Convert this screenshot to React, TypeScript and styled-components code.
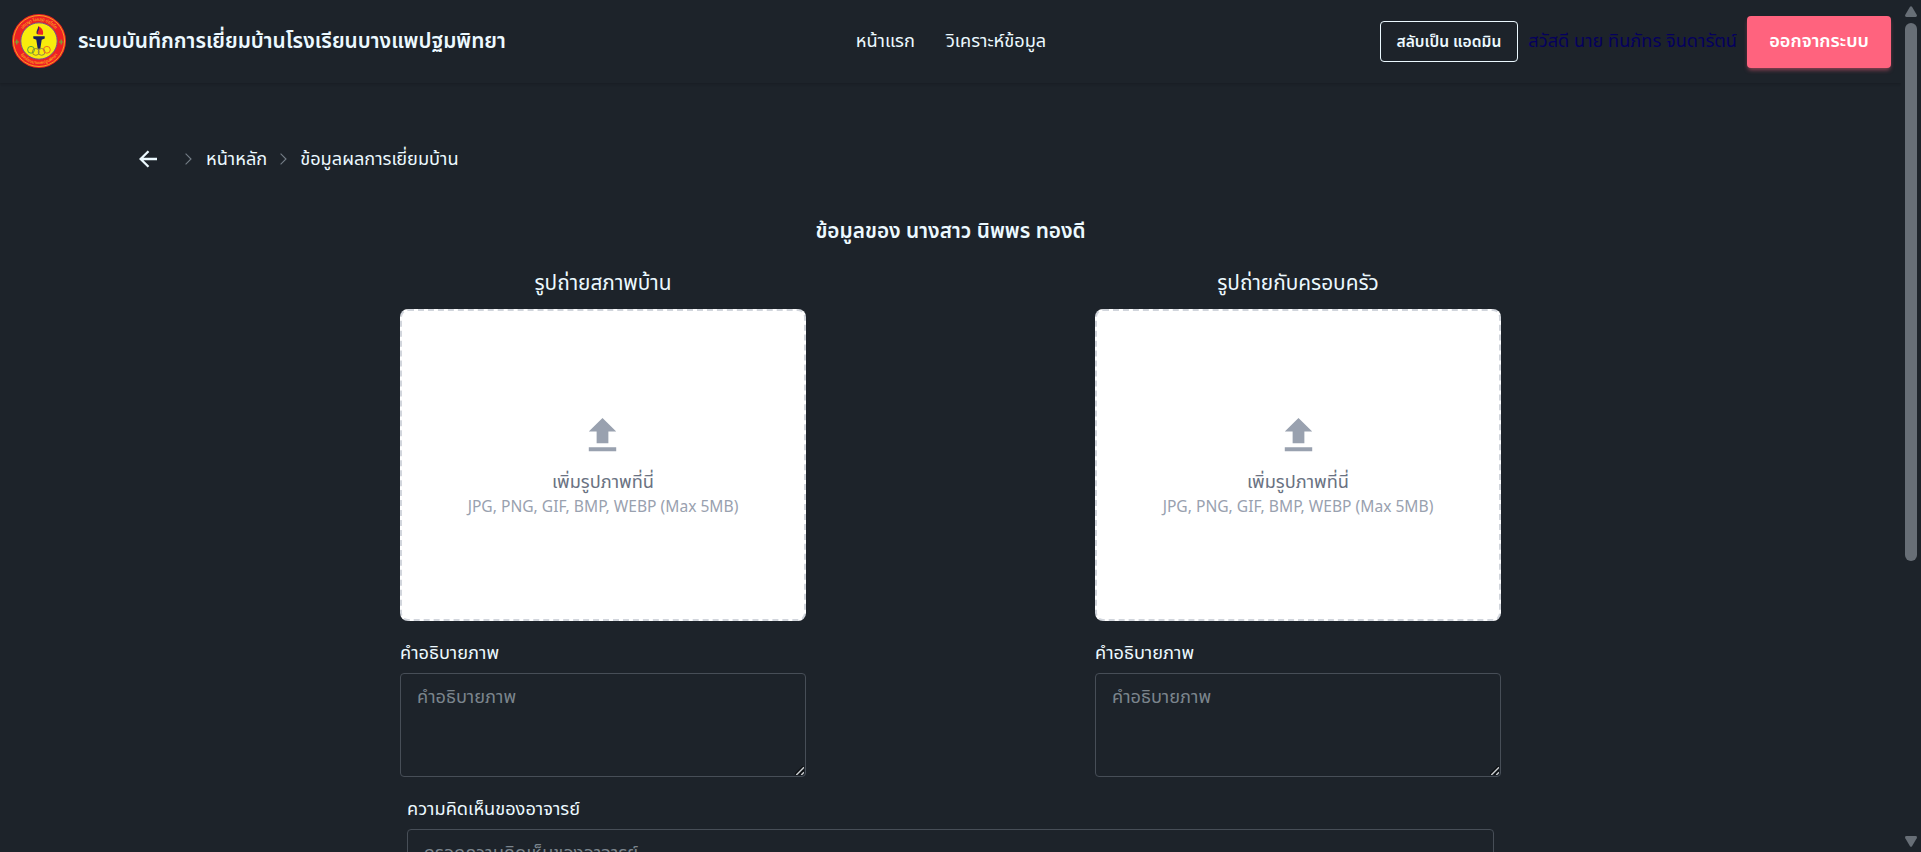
import React from 'react';
import styled, { createGlobalStyle } from 'styled-components';

const GlobalStyle = createGlobalStyle`
  *, *::before, *::after { box-sizing: border-box; }
  html, body { margin: 0; height: 100%; background: #1d232a; overflow: hidden; }
  body, button, textarea { font-family: 'Noto Sans Thai', 'Noto Sans', sans-serif; }
  h1, h2, p { margin: 0; font-weight: 400; }
`;

const Window = styled.div`
  display: flex;
  height: 852px;
  overflow: hidden;
  color: #ecf9ff;
  font-size: 18.2px;
  line-height: 24px;
`;

const Page = styled.div`
  flex: 1;
  min-width: 0;
  height: 100%;
  overflow: hidden;
`;

const Navbar = styled.header`
  display: grid;
  grid-template-columns: 1fr auto 1fr;
  align-items: center;
  height: 83px;
  padding: 0 10px 0 12px;
  box-shadow: 0 1px 3px rgba(0, 0, 0, 0.1), 0 1px 2px rgba(0, 0, 0, 0.06);
`;

const Brand = styled.div`
  display: flex;
  align-items: center;
  gap: 12px;
  white-space: nowrap;

  svg { flex: none; }
`;

const BrandName = styled.span`
  font-size: 20.8px;
  font-weight: 600;
  line-height: 28px;
`;

const NavLinks = styled.nav`
  display: flex;
  gap: 31px;
  padding-right: 1px;
`;

const NavLink = styled.a`
  white-space: nowrap;
`;

const Account = styled.div`
  display: flex;
  justify-content: flex-end;
  align-items: center;
  gap: 10px;
  white-space: nowrap;
`;

const SwitchButton = styled.button`
  width: 138px;
  height: 41px;
  padding: 0 1px 0 0;
  border: 1px solid #ecf9ff;
  border-radius: 4px;
  background: transparent;
  color: #ecf9ff;
  font-size: 15.6px;
  font-weight: 600;
`;

const Greeting = styled.span`
  color: #05005e;
`;

const LogoutButton = styled.button`
  width: 144px;
  height: 52px;
  padding: 0;
  border: 0;
  border-radius: 4px;
  background: #ff637e;
  color: #fff;
  font-size: 18.2px;
  font-weight: 600;
  box-shadow: 0 3px 4px -1px rgba(255, 99, 126, 0.5);
`;

const Breadcrumbs = styled.div`
  display: flex;
  align-items: center;
  height: 24px;
  margin: 64px 0 0 139px;
  white-space: nowrap;

  svg { flex: none; }
`;

const BackLink = styled.a`
  display: flex;
  padding-bottom: 1px;
`;

const CrumbMark = styled.span<{ $left: number; $right: number }>`
  display: flex;
  padding: 0 ${(p) => p.$right}px 0 ${(p) => p.$left}px;
`;

const Crumb = styled.span`
  padding-top: 1px;
`;

const Heading = styled.h1`
  margin-top: 47px;
  text-align: center;
  font-size: 20.8px;
  font-weight: 600;
  line-height: 28px;
`;

const Columns = styled.section`
  display: flex;
  justify-content: space-between;
  width: 1101px;
  margin: 24px auto 0;
`;

const PhotoTitle = styled.h2`
  text-align: center;
  font-size: 20.8px;
  line-height: 28px;
`;

const DropZone = styled.div`
  display: flex;
  flex-direction: column;
  align-items: center;
  height: 312px;
  margin-top: 11px;
  padding-top: 101px;
  border: 2px dashed #d1d5dc;
  border-radius: 8px;
  background: #fff;
  color: #99a1af;
`;

const Column = styled.div`
  display: flex;
  flex-direction: column;
  width: 406px;

  &:first-child ${DropZone} > svg { margin-right: 1px; }
`;

const DropText = styled.p`
  margin-top: 10px;
  color: #6a7282;
  line-height: 28px;
`;

const DropHint = styled.p`
  font-size: 15.6px;
  line-height: 24px;
  margin-top: -2px;
`;

const FieldLabel = styled.label`
  margin-top: 21px;
`;

const Field = styled.div`
  position: relative;
  margin-top: 7px;
`;

const TextArea = styled.textarea`
  display: block;
  width: 100%;
  height: 104px;
  margin: 0;
  padding: 12px 16px;
  border: 1px solid #474e57;
  border-radius: 4px;
  outline: 0;
  resize: none;
  background: #1d232a;
  color: #ecf9ff;
  font-size: 18.2px;
  line-height: 24px;

  &::placeholder { color: #7b858d; opacity: 1; }
`;

const Grip = styled.svg`
  position: absolute;
  right: 2px;
  bottom: 2px;
`;

const Comment = styled.section`
  display: flex;
  flex-direction: column;
  width: 1087px;
  margin: 0 auto;
`;

const Scrollbar = styled.div`
  display: flex;
  flex-direction: column;
  width: 20px;
  height: 100%;
  padding: 6px 4px 5px;
  color: #676e76;

  svg { display: block; flex: none; }
`;

const Track = styled.div`
  flex: 1;
  padding-top: 6px;
`;

const Thumb = styled.div`
  width: 12px;
  height: 538px;
  border-radius: 6px;
  background: #676e76;
`;

const SchoolEmblem = () => (
  <svg width="54" height="55" viewBox="0 0 54 55">
    <defs>
      <path id="arcTop" d="M6.8 27a20.2 20.2 0 0 1 40.4 0" />
      <path id="arcBottom" d="M3.9 27a23.1 23.1 0 0 0 46.2 0" />
    </defs>
    <circle cx="27" cy="27" r="27" fill="#ee2024" />
    <circle cx="27" cy="27" r="25.5" fill="none" stroke="#f6c81c" strokeWidth="0.8" />
    <circle cx="27" cy="27" r="18.2" fill="#f8ec0c" stroke="#76558a" strokeWidth="1" />
    <g fill="#ffd21c" fontSize="4.2" textAnchor="middle" fontFamily="Noto Sans Thai, Noto Sans, sans-serif">
      <text><textPath href="#arcTop" startOffset="50%">ปญฺญา โลกสฺมิ ปชฺโชโต</textPath></text>
      <text><textPath href="#arcBottom" startOffset="50%">โรงเรียนบางแพปฐมพิทยา</textPath></text>
    </g>
    <path d="M4.8 25.5v5M2.6 28h4.4M49.2 25.5v5M47 28h4.4" stroke="#6fae35" strokeWidth="1.2" />
    <path d="M25.5 20.5c-1.8-3.6 1.5-4.7.6-8.3 3.8 1.2 5.9 4.8 4.8 8.5Z" fill="#ee2024" />
    <path d="M24.8 20c-1-3.3 1.5-5 1.3-7.8 1.6 1.6 1.2 3.2.4 4.4-.8 1.2-.9 2.1-.7 3.4Z" fill="#342460" />
    <path d="M21.3 22.2h11.4v2.2l-3 1.4-1.4 9h-2.6l-1.4-9-3-1.4Z" fill="#17205c" />
    <g fill="none" strokeWidth="0.9">
      <circle cx="19" cy="35.8" r="3.4" stroke="#3e9b44" />
      <circle cx="23.8" cy="37.9" r="3.4" stroke="#927d35" />
      <circle cx="29.6" cy="37.9" r="3.4" stroke="#8d7b55" />
      <circle cx="34.9" cy="35.8" r="3.4" stroke="#ef5a24" />
    </g>
  </svg>
);

const BackArrow = () => (
  <svg width="18" height="18" viewBox="0 0 18 18" fill="none" stroke="currentColor" strokeWidth="2.3">
    <path d="M18 9H2M9.5 1.2 1.6 9l7.9 7.8" />
  </svg>
);

const Chevron = () => (
  <svg width="7" height="12" viewBox="0 0 7 12" fill="none" stroke="#747d86" strokeWidth="1.1">
    <path d="M.6.7 6 6 .6 11.3" />
  </svg>
);

const UploadIcon = () => (
  <svg width="47" height="47" viewBox="0 0 24 24" fill="currentColor">
    <path d="M9 16h6v-6h4l-7-7-7 7h4zM5 18h14v2H5z" />
  </svg>
);

function TextField({ label, placeholder }: { label: string; placeholder: string }) {
  return (
    <>
      <FieldLabel>{label}</FieldLabel>
      <Field>
        <TextArea placeholder={placeholder} />
        <Grip width="9" height="9" viewBox="0 0 9 9" fill="none">
          <path d="M0 8.5 8.5 0M4 9 9 4" stroke="#0a0c0f" strokeWidth="1.4" />
          <path d="M1.3 9 9 1.3M6.3 9 9 6.3" stroke="#c9cccf" strokeWidth="1.4" />
        </Grip>
      </Field>
    </>
  );
}

function PhotoColumn({ title }: { title: string }) {
  return (
    <Column>
      <PhotoTitle>{title}</PhotoTitle>
      <DropZone>
        <UploadIcon />
        <DropText>เพิ่มรูปภาพที่นี่</DropText>
        <DropHint>JPG, PNG, GIF, BMP, WEBP (Max 5MB)</DropHint>
      </DropZone>
      <TextField label="คำอธิบายภาพ" placeholder="คำอธิบายภาพ" />
    </Column>
  );
}

export default function App() {
  return (
    <Window>
      <GlobalStyle />
      <Page>
        <Navbar>
          <Brand>
            <SchoolEmblem />
            <BrandName>ระบบบันทึกการเยี่ยมบ้านโรงเรียนบางแพปฐมพิทยา</BrandName>
          </Brand>
          <NavLinks>
            <NavLink>หน้าแรก</NavLink>
            <NavLink>วิเคราะห์ข้อมูล</NavLink>
          </NavLinks>
          <Account>
            <SwitchButton>สลับเป็น แอดมิน</SwitchButton>
            <Greeting>สวัสดี นาย ทินภัทร จินดารัตน์</Greeting>
            <LogoutButton>ออกจากระบบ</LogoutButton>
          </Account>
        </Navbar>
        <Breadcrumbs>
          <BackLink><BackArrow /></BackLink>
          <CrumbMark $left={28} $right={14}><Chevron /></CrumbMark>
          <Crumb>หน้าหลัก</Crumb>
          <CrumbMark $left={13} $right={13}><Chevron /></CrumbMark>
          <Crumb>ข้อมูลผลการเยี่ยมบ้าน</Crumb>
        </Breadcrumbs>
        <Heading>ข้อมูลของ นางสาว นิพพร ทองดี</Heading>
        <Columns>
          <PhotoColumn title="รูปถ่ายสภาพบ้าน" />
          <PhotoColumn title="รูปถ่ายกับครอบครัว" />
        </Columns>
        <Comment>
          <TextField label="ความคิดเห็นของอาจารย์" placeholder="กรอกความคิดเห็นของอาจารย์" />
        </Comment>
      </Page>
      <Scrollbar>
        <svg width="12" height="11" viewBox="0 0 12 11" fill="currentColor"><path d="M5 .8q1-1.3 2 0l4.7 8q.8 2-1 2.2H1.3q-1.8-.2-1-2.2Z" /></svg>
        <Track><Thumb /></Track>
        <svg width="12" height="11" viewBox="0 0 12 11" fill="currentColor"><path d="M5 10.2q1 1.3 2 0l4.7-8q.8-2-1-2.2H1.3Q-.5.2.3 2.2Z" /></svg>
      </Scrollbar>
    </Window>
  );
}
